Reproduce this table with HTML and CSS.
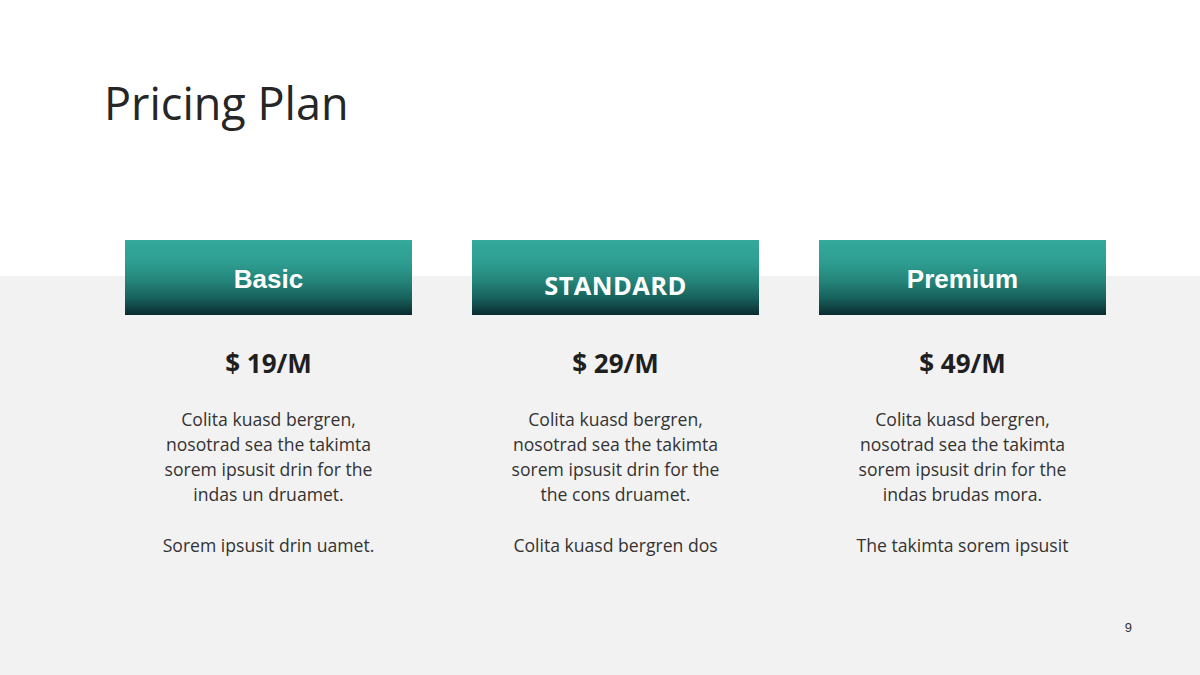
FILE: index.html
```html
<!DOCTYPE html>
<html>
<head>
<meta charset="utf-8">
<link rel="stylesheet" href="styles.css">
</head>
<body>
<div class="slide">
  <h1 class="title">Pricing Plan</h1>
  <div class="plans">
    <div class="plan">
      <div class="plan-head"><span class="name name-arial">Basic</span></div>
      <div class="price">$ 19/M</div>
      <p class="desc">Colita kuasd bergren,<br>nosotrad sea the takimta<br>sorem ipsusit drin for the<br>indas un druamet.</p>
      <p class="desc">Sorem ipsusit drin uamet.</p>
    </div>
    <div class="plan">
      <div class="plan-head"><span class="name name-open">STANDARD</span></div>
      <div class="price">$ 29/M</div>
      <p class="desc">Colita kuasd bergren,<br>nosotrad sea the takimta<br>sorem ipsusit drin for the<br>the cons druamet.</p>
      <p class="desc">Colita kuasd bergren dos</p>
    </div>
    <div class="plan">
      <div class="plan-head"><span class="name name-arial">Premium</span></div>
      <div class="price">$ 49/M</div>
      <p class="desc">Colita kuasd bergren,<br>nosotrad sea the takimta<br>sorem ipsusit drin for the<br>indas brudas mora.</p>
      <p class="desc">The takimta sorem ipsusit</p>
    </div>
  </div>
  <div class="footer"><span class="page-num">9</span></div>
</div>
</body>
</html>
```

FILE: styles.css
```css
* { box-sizing: border-box; }
html, body { margin: 0; padding: 0; }
body { background: #ffffff; }

.slide {
  width: 1200px;
  height: 675px;
  display: flex;
  flex-direction: column;
  background: linear-gradient(to bottom, #ffffff 0, #ffffff 276px, #f2f2f2 276px, #f2f2f2 100%);
  font-family: "Open Sans", "Liberation Sans", sans-serif;
  overflow: hidden;
}

.title {
  margin: 0;
  padding: 75px 0 0 104px;
  font-size: 45px;
  line-height: 55px;
  font-weight: 400;
  color: #262626;
}

.plans {
  margin-top: 110px;
  padding-left: 125px;
  display: grid;
  grid-template-columns: repeat(3, 287px);
  column-gap: 60px;
}

.plan {
  display: flex;
  flex-direction: column;
  align-items: center;
  text-align: center;
}

.plan-head {
  width: 100%;
  height: 75px;
  display: flex;
  align-items: center;
  justify-content: center;
  background: linear-gradient(to bottom, #34a99c 0%, #2e9d91 30%, #248479 55%, #17605c 78%, #0a2b2f 100%);
  color: #ffffff;
}

.name-arial {
  font-family: "Liberation Sans", Arial, sans-serif;
  font-weight: 700;
  font-size: 26px;
  line-height: 30px;
  padding-top: 2px;
}

.name-open {
  font-family: "Open Sans", sans-serif;
  font-weight: 700;
  font-size: 25.5px;
  line-height: 30px;
  padding-top: 14px;
  letter-spacing: 0.4px;
}

.price {
  margin-top: 33px;
  font-size: 26px;
  line-height: 30px;
  font-weight: 700;
  color: #1f1f1f;
}

.desc {
  margin: 29px 0 0 0;
  font-size: 17.6px;
  line-height: 25px;
  color: #333333;
}

.desc + .desc {
  margin-top: 26px;
}

.footer {
  margin-top: auto;
  display: flex;
  justify-content: flex-end;
  padding: 0 68px 40px 0;
}

.page-num {
  font-family: "Liberation Sans", Arial, sans-serif;
  font-size: 13px;
  line-height: 15px;
  color: #333333;
}
```
